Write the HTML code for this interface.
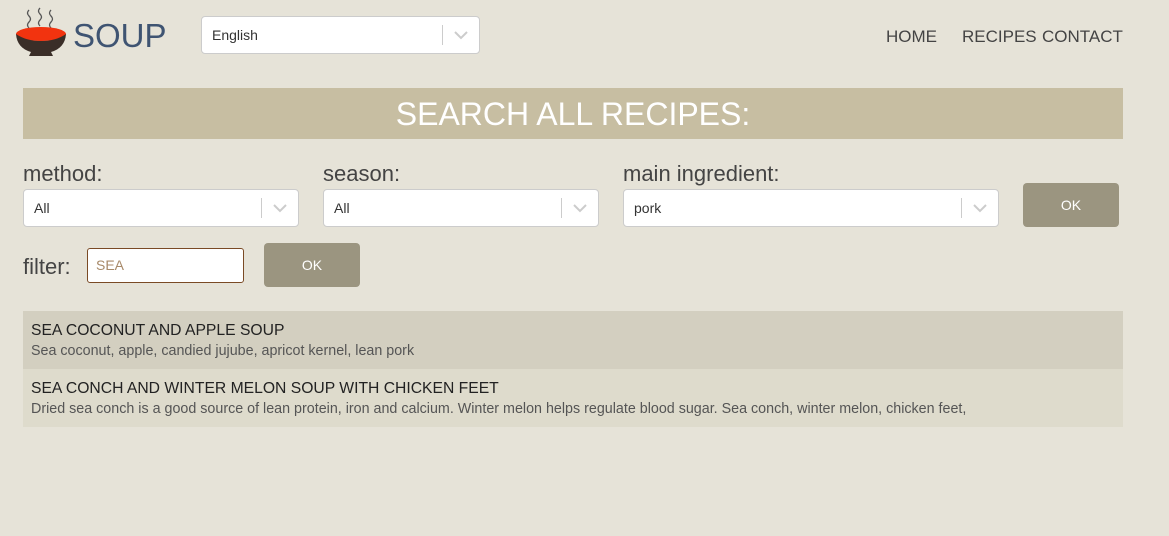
<!DOCTYPE html>
<html><head><style>
*{box-sizing:border-box;margin:0;padding:0}
body{width:1169px;height:536px;background:#e6e3d8;font-family:"Liberation Sans",sans-serif;position:relative;overflow:hidden;color:#333}
.abs{position:absolute}
.sel{position:absolute;background:#fff;border:1px solid #ccc;border-radius:4px;height:38px;font-size:14px;color:#333;padding-left:10px;line-height:36px}
.sel .sep{position:absolute;right:36px;top:8px;width:1px;height:20px;background:#ccc}
.sel svg{position:absolute;right:11px;top:13px}
.lbl{position:absolute;font-size:22px;color:#444}
.btn{position:absolute;background:#9b9580;color:#fff;border-radius:4px;font-size:14px;text-align:center}
.nav{position:absolute;top:27px;font-size:17px;color:#444}
.row{position:absolute;left:23px;width:1100px;height:58px;padding:10px 8px}
.row h3{font-weight:normal;font-size:15.7px;color:#222;line-height:18px;margin-top:1px}
.row p{font-size:14.3px;color:#555;margin-top:3px}
</style></head><body>
<svg class="abs" style="left:14px;top:7px" width="54" height="50" viewBox="0 0 54 50">
<path d="M15 3 q-3 3 0 6 q3 3 0 6 q-3 3 0 6 M26 1 q-3 3 0 6 q3 3 0 6 q-3 3 0 6 M37 3 q-3 3 0 6 q3 3 0 6 q-3 3 0 6" stroke="#555" stroke-width="1.3" fill="none"/>
<ellipse cx="27" cy="27" rx="25" ry="7" fill="#f2330f"/>
<path d="M2 27 q1 14 15 18 l-2 4 h24 l-2 -4 q14 -4 15 -18 q-10 7 -25 7 q-15 0 -25 -7z" fill="#3a2e28"/>
</svg>
<div class="abs" style="left:73px;top:17px;font-size:33px;color:#3f5472">SOUP</div>
<div class="sel" style="left:201px;top:16px;width:279px">English<div class="sep"></div><svg width="14" height="10"><path d="M1 2l6 6 6-6" stroke="#ccc" stroke-width="2" fill="none"/></svg></div>
<div class="nav" style="left:886px">HOME</div>
<div class="nav" style="left:962px">RECIPES</div>
<div class="nav" style="left:1042px">CONTACT</div>
<div class="abs" style="left:23px;top:88px;width:1100px;height:51px;background:#c7bea2;color:#fff;font-size:32px;text-align:center;line-height:52px">SEARCH ALL RECIPES:</div>
<div class="lbl" style="left:23px;top:161px">method:</div>
<div class="lbl" style="left:323px;top:161px">season:</div>
<div class="lbl" style="left:623px;top:161px">main ingredient:</div>
<div class="sel" style="left:23px;top:189px;width:276px">All<div class="sep"></div><svg width="14" height="10"><path d="M1 2l6 6 6-6" stroke="#ccc" stroke-width="2" fill="none"/></svg></div>
<div class="sel" style="left:323px;top:189px;width:276px">All<div class="sep"></div><svg width="14" height="10"><path d="M1 2l6 6 6-6" stroke="#ccc" stroke-width="2" fill="none"/></svg></div>
<div class="sel" style="left:623px;top:189px;width:376px">pork<div class="sep"></div><svg width="14" height="10"><path d="M1 2l6 6 6-6" stroke="#ccc" stroke-width="2" fill="none"/></svg></div>
<div class="btn" style="left:1023px;top:183px;width:96px;height:44px;line-height:44px">OK</div>
<div class="lbl" style="left:23px;top:254px">filter:</div>
<div class="abs" style="left:87px;top:248px;width:157px;height:35px;background:#fff;border:1px solid #7a4a25;border-radius:3px;font-size:14px;color:#a88a6a;padding-left:8px;line-height:33px">SEA</div>
<div class="btn" style="left:264px;top:243px;width:96px;height:44px;line-height:44px">OK</div>
<div class="row" style="top:311px;background:#d3cfc0"><h3>SEA COCONUT AND APPLE SOUP</h3><p>Sea coconut, apple, candied jujube, apricot kernel, lean pork</p></div>
<div class="row" style="top:369px;background:#dedbcc"><h3>SEA CONCH AND WINTER MELON SOUP WITH CHICKEN FEET</h3><p>Dried sea conch is a good source of lean protein, iron and calcium. Winter melon helps regulate blood sugar. Sea conch, winter melon, chicken feet,</p></div>
</body></html>
